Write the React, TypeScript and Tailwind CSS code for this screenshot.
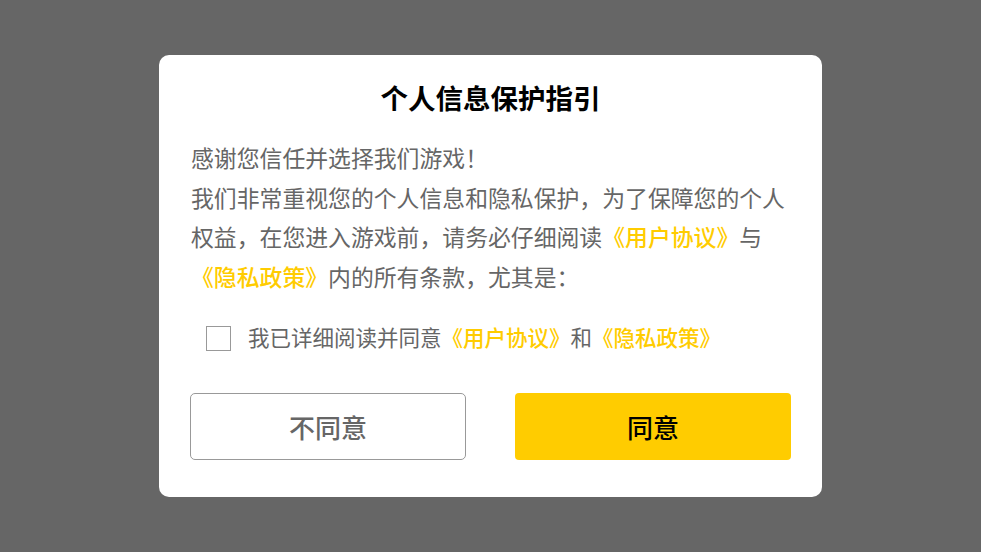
export default function App() {
  const font = { fontFamily: '"Noto Sans CJK SC", "Noto Sans", sans-serif' };
  return (
    <div className="w-[981px] h-[552px] bg-[#666666] flex items-center justify-center" style={font}>
      <div className="w-[663px] h-[442px] bg-white rounded-[10px] flex flex-col pt-[22px] px-[31px]">
        <div className="text-center text-[27.5px] leading-[40px] font-semibold text-black">个人信息保护指引</div>
        <div className="mt-[21px] pl-px text-[22.85px] leading-[39.5px] text-[#666666]">
          <p>感谢您信任并选择我们游戏！</p>
          <p>
            我们非常重视您的个人信息和隐私保护，为了保障您的个人权益，在您进入游戏前，请务必仔细阅读
            <span className="text-[#ffcc00] font-medium">《用户协议》</span>与
            <span className="text-[#ffcc00] font-medium">《隐私政策》</span>内的所有条款，尤其是：
          </p>
        </div>
        <div className="mt-[29px] pl-[16px] flex items-center h-[26px]">
          <div className="w-[25px] h-[25px] border-[1.5px] border-[#999999] bg-white" />
          <div className="ml-[17px] text-[21.5px] leading-[26px] text-[#666666] whitespace-nowrap -translate-y-[1px]">
            我已详细阅读并同意<span className="text-[#ffcc00] font-medium">《用户协议》</span>和<span className="text-[#ffcc00] font-medium">《隐私政策》</span>
          </div>
        </div>
        <div className="mt-[42px] flex justify-between">
          <button className="w-[276px] h-[67px] rounded-[5px] border border-[#999999] bg-white text-[26px] font-medium text-[#666666] flex items-center justify-center">
            不同意
          </button>
          <button className="w-[276px] h-[67px] rounded-[4px] bg-[#ffcc00] text-[26px] font-medium text-black flex items-center justify-center">
            同意
          </button>
        </div>
      </div>
    </div>
  );
}
